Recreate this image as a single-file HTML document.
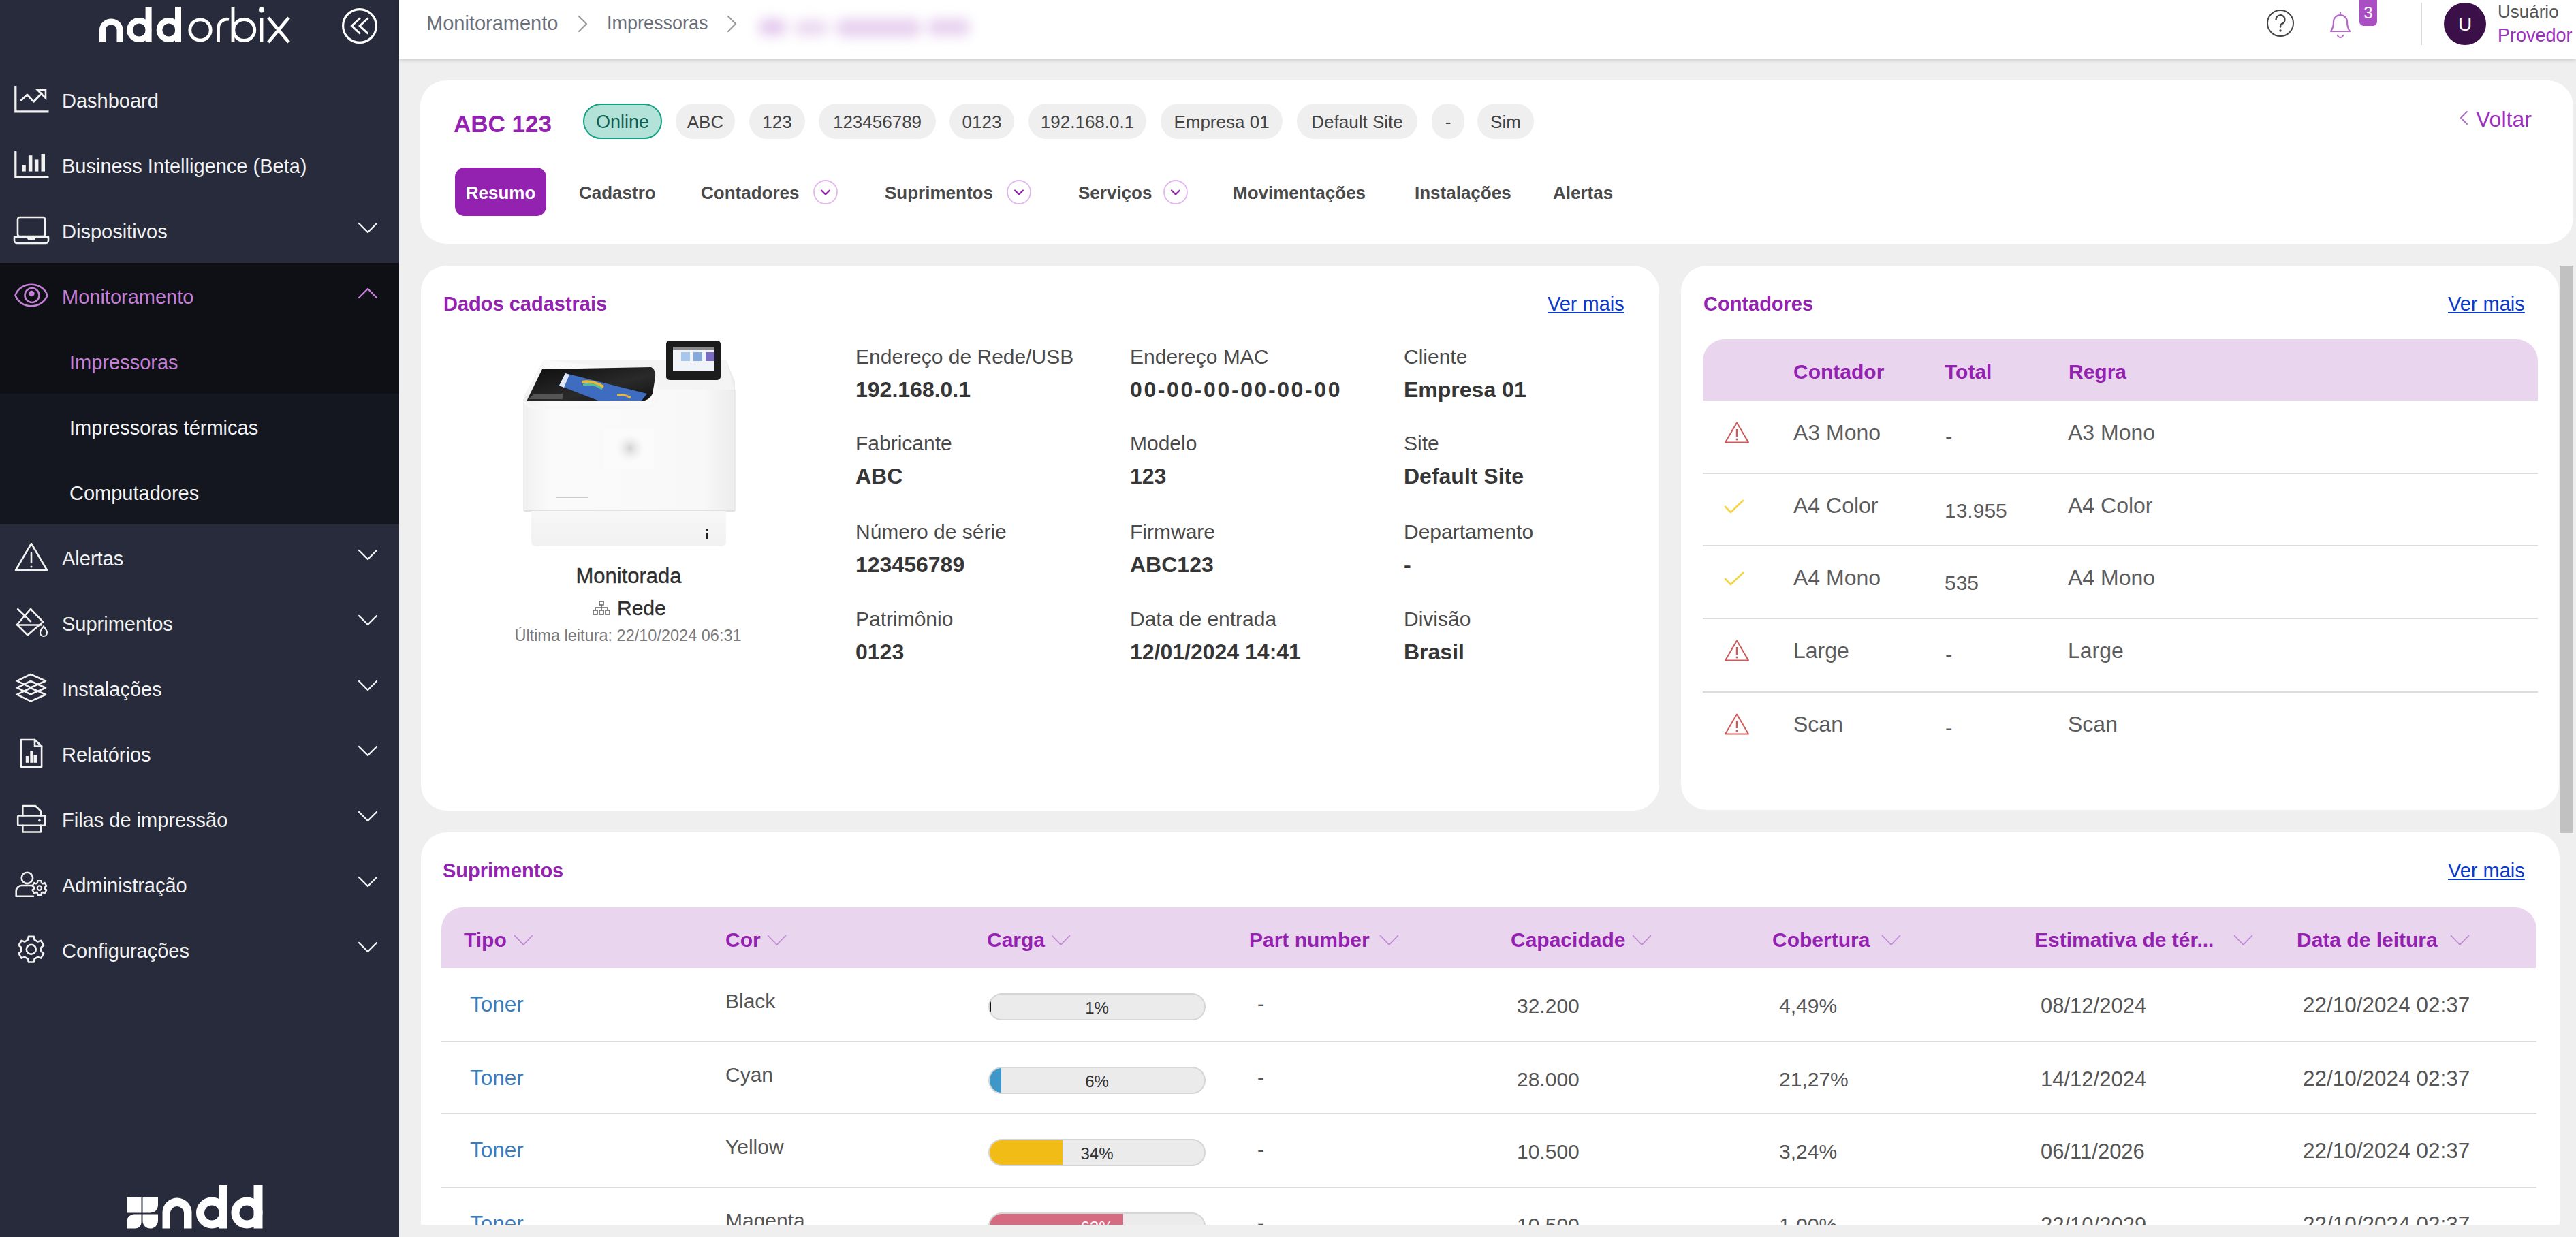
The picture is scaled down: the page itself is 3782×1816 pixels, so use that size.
<!DOCTYPE html>
<html><head><meta charset="utf-8"><style>
html,body{margin:0;padding:0;width:3782px;height:1816px;overflow:hidden;position:relative;font-family:"Liberation Sans",sans-serif}
.t{position:absolute;white-space:nowrap;line-height:1}
</style></head><body>
<div style="position:absolute;left:0px;top:0px;width:3782px;height:1816px;background:#efefef"></div>
<div style="position:absolute;left:0px;top:0px;width:586px;height:1816px;background:#272b3b"></div>
<div style="position:absolute;left:0px;top:386px;width:586px;height:192px;background:#0f1016"></div>
<div style="position:absolute;left:0px;top:578px;width:586px;height:192px;background:#141620"></div>
<div style="position:absolute;left:586px;top:0px;width:3196px;height:86px;background:#fff;box-shadow:0 2px 6px rgba(0,0,0,0.18)"></div>
<div style="position:absolute;left:617px;top:118px;width:3161px;height:240px;background:#fff;border-radius:38px"></div>
<div style="position:absolute;left:618px;top:390px;width:1818px;height:800px;background:#fff;border-radius:38px"></div>
<div style="position:absolute;left:2468px;top:390px;width:1289px;height:799px;background:#fff;border-radius:38px"></div>
<div style="position:absolute;left:618px;top:1222px;width:3140px;height:678px;background:#fff;border-radius:38px"></div>
<div style="position:absolute;left:3758px;top:390px;width:20px;height:833px;background:#c1c1c1"></div>
<svg style="position:absolute;left:140px;top:6px;" width="292" height="60" viewBox="0 0 292 60" fill="none">
      <g fill="#fff">
        <path d="M6 56 V36 A17.5 17.5 0 0 1 40.5 36 V56 H31.5 V37 A8.5 8.5 0 0 0 15 37 V56 Z"/>
        <rect x="73.6" y="4" width="9" height="52"/>
        <rect x="117" y="4" width="9" height="52"/>
      </g>
      <g stroke="#fff" fill="none">
        <circle cx="64.3" cy="38" r="13.8" stroke-width="8.6"/>
        <circle cx="107.8" cy="38" r="13.8" stroke-width="8.6"/>
        <circle cx="154" cy="38" r="15.2" stroke-width="4.8"/>
        <path d="M180.5 56 V36 A13 13 0 0 1 196 22.5" stroke-width="4.8"/>
        <path d="M202 4 V56" stroke-width="4.8"/>
        <circle cx="218.3" cy="38" r="15.5" stroke-width="4.8"/>
        <path d="M244 20 V56" stroke-width="4.8"/>
      </g>
      <circle cx="244" cy="8.5" r="4" fill="#fff"/>
      <path d="M254 20 L284 56 M284 20 L254 56" stroke="#fff" stroke-width="4.8"/>
    </svg>
<svg style="position:absolute;left:500px;top:11px;" width="56" height="56" viewBox="0 0 56 56" fill="none"><circle cx="28" cy="27" r="24.4" stroke="#fff" stroke-width="3.2"/>
      <path d="M28.8 15.5 L16.5 27 L28.8 38.5 M40.5 15.5 L28.2 27 L40.5 38.5" stroke="#fff" stroke-width="3" stroke-linecap="butt" stroke-linejoin="miter"/></svg>
<div class="t" style="left:91.0px;top:133.5px;font-size:29px;font-weight:400;color:#f2f2f2;">Dashboard</div>
<div class="t" style="left:91.0px;top:229.5px;font-size:29px;font-weight:400;color:#f2f2f2;">Business Intelligence (Beta)</div>
<div class="t" style="left:91.0px;top:325.5px;font-size:29px;font-weight:400;color:#f2f2f2;">Dispositivos</div>
<svg style="position:absolute;left:525px;top:326px;" width="30" height="17" viewBox="0 0 30 17" fill="none"><path d="M2 2 L15 15 L28 2" stroke="#f2f2f2" stroke-width="2.4" stroke-linecap="round" stroke-linejoin="round"/></svg>
<div class="t" style="left:91.0px;top:421.5px;font-size:29px;font-weight:400;color:#c47fd6;">Monitoramento</div>
<svg style="position:absolute;left:525px;top:422px;" width="30" height="17" viewBox="0 0 30 17" fill="none"><path d="M2 15 L15 2 L28 15" stroke="#c47fd6" stroke-width="2.4" stroke-linecap="round" stroke-linejoin="round"/></svg>
<div class="t" style="left:91.0px;top:805.5px;font-size:29px;font-weight:400;color:#f2f2f2;">Alertas</div>
<svg style="position:absolute;left:525px;top:806px;" width="30" height="17" viewBox="0 0 30 17" fill="none"><path d="M2 2 L15 15 L28 2" stroke="#f2f2f2" stroke-width="2.4" stroke-linecap="round" stroke-linejoin="round"/></svg>
<div class="t" style="left:91.0px;top:901.5px;font-size:29px;font-weight:400;color:#f2f2f2;">Suprimentos</div>
<svg style="position:absolute;left:525px;top:902px;" width="30" height="17" viewBox="0 0 30 17" fill="none"><path d="M2 2 L15 15 L28 2" stroke="#f2f2f2" stroke-width="2.4" stroke-linecap="round" stroke-linejoin="round"/></svg>
<div class="t" style="left:91.0px;top:997.5px;font-size:29px;font-weight:400;color:#f2f2f2;">Instalações</div>
<svg style="position:absolute;left:525px;top:998px;" width="30" height="17" viewBox="0 0 30 17" fill="none"><path d="M2 2 L15 15 L28 2" stroke="#f2f2f2" stroke-width="2.4" stroke-linecap="round" stroke-linejoin="round"/></svg>
<div class="t" style="left:91.0px;top:1093.5px;font-size:29px;font-weight:400;color:#f2f2f2;">Relatórios</div>
<svg style="position:absolute;left:525px;top:1094px;" width="30" height="17" viewBox="0 0 30 17" fill="none"><path d="M2 2 L15 15 L28 2" stroke="#f2f2f2" stroke-width="2.4" stroke-linecap="round" stroke-linejoin="round"/></svg>
<div class="t" style="left:91.0px;top:1189.5px;font-size:29px;font-weight:400;color:#f2f2f2;">Filas de impressão</div>
<svg style="position:absolute;left:525px;top:1190px;" width="30" height="17" viewBox="0 0 30 17" fill="none"><path d="M2 2 L15 15 L28 2" stroke="#f2f2f2" stroke-width="2.4" stroke-linecap="round" stroke-linejoin="round"/></svg>
<div class="t" style="left:91.0px;top:1285.5px;font-size:29px;font-weight:400;color:#f2f2f2;">Administração</div>
<svg style="position:absolute;left:525px;top:1286px;" width="30" height="17" viewBox="0 0 30 17" fill="none"><path d="M2 2 L15 15 L28 2" stroke="#f2f2f2" stroke-width="2.4" stroke-linecap="round" stroke-linejoin="round"/></svg>
<div class="t" style="left:91.0px;top:1381.5px;font-size:29px;font-weight:400;color:#f2f2f2;">Configurações</div>
<svg style="position:absolute;left:525px;top:1382px;" width="30" height="17" viewBox="0 0 30 17" fill="none"><path d="M2 2 L15 15 L28 2" stroke="#f2f2f2" stroke-width="2.4" stroke-linecap="round" stroke-linejoin="round"/></svg>
<div class="t" style="left:102.0px;top:517.5px;font-size:29px;font-weight:400;color:#c47fd6;">Impressoras</div>
<div class="t" style="left:102.0px;top:613.5px;font-size:29px;font-weight:400;color:#f2f2f2;">Impressoras térmicas</div>
<div class="t" style="left:102.0px;top:709.5px;font-size:29px;font-weight:400;color:#f2f2f2;">Computadores</div>
<svg style="position:absolute;left:18px;top:123px;" width="56" height="46" viewBox="0 0 56 46" fill="none"><path d="M4.8 3 V40.8 H53.5" stroke="#f2f2f2" stroke-width="3.2" fill="none" stroke-linejoin="miter"/><path d="M12.2 25 L21.9 16 L31.5 26.2 L44 13" stroke="#f2f2f2" stroke-width="3" fill="none" stroke-linejoin="round"/><path d="M37 9 H49 V21 Z" stroke="#f2f2f2" stroke-width="2.6" fill="none" stroke-linejoin="miter"/></svg>
<svg style="position:absolute;left:18px;top:220px;" width="56" height="44" viewBox="0 0 56 44" fill="none"><path d="M4.8 2 V39.6 H53.5" stroke="#f2f2f2" stroke-width="3.2" fill="none" stroke-linejoin="miter"/><rect x="14.3" y="22" width="5.5" height="9.6" fill="#f2f2f2"/><rect x="23.9" y="8.2" width="5.5" height="23.4" fill="#f2f2f2"/><rect x="32.9" y="14.4" width="5.5" height="17.2" fill="#f2f2f2"/><rect x="42.5" y="6" width="5.5" height="25.6" fill="#f2f2f2"/></svg>
<svg style="position:absolute;left:18px;top:316px;" width="56" height="44" viewBox="0 0 56 44" fill="none"><rect x="8" y="3" width="40" height="28" rx="3" stroke="#f2f2f2" stroke-width="2.6" fill="none" stroke-linecap="round" stroke-linejoin="round"/><path d="M3 32 H53 V37 A4 4 0 0 1 49 41 H7 A4 4 0 0 1 3 37 Z" stroke="#f2f2f2" stroke-width="2.6" fill="none" stroke-linecap="round" stroke-linejoin="round"/><path d="M22 32 L24 35 H32 L34 32" stroke="#f2f2f2" stroke-width="2.6" fill="none" stroke-linecap="round" stroke-linejoin="round"/></svg>
<svg style="position:absolute;left:20px;top:414px;" width="52" height="40" viewBox="0 0 52 40" fill="none"><path d="M2.5 19.5 C10 -1.5 42 -1.5 49.5 19.5 C42 40.5 10 40.5 2.5 19.5 Z" stroke="#c47fd6" stroke-width="2.6" fill="none"/><circle cx="27" cy="19.5" r="10.5" stroke="#c47fd6" stroke-width="2.6" fill="none"/><circle cx="26.5" cy="17" r="4.2" fill="#c47fd6"/></svg>
<svg style="position:absolute;left:20px;top:795px;" width="52" height="46" viewBox="0 0 52 46" fill="none"><path d="M26 3 L49 42 H3 Z" stroke="#f2f2f2" stroke-width="2.6" fill="none" stroke-linecap="round" stroke-linejoin="round"/><path d="M26 17 V31" stroke="#f2f2f2" stroke-width="2.6" fill="none" stroke-linecap="round" stroke-linejoin="round"/><circle cx="26" cy="37" r="1.6" fill="#f2f2f2"/></svg>
<svg style="position:absolute;left:20px;top:891px;" width="52" height="46" viewBox="0 0 52 46" fill="none"><path d="M25 3 L43 22 L20.4 41.4 L5 26 Z" stroke="#f2f2f2" stroke-width="2.6" fill="none" stroke-linecap="round" stroke-linejoin="round"/><path d="M5.5 26.5 H41" stroke="#f2f2f2" stroke-width="2.6" fill="none" stroke-linecap="round" stroke-linejoin="round"/><path d="M6.2 3.2 L25 21.4" stroke="#f2f2f2" stroke-width="2.6" fill="none" stroke-linecap="round" stroke-linejoin="round"/><path d="M44 28.5 C47 32 49 35 49 38 A5 5 0 0 1 39 38 C39 35 41 32 44 28.5 Z" stroke="#f2f2f2" stroke-width="2.2" fill="none"/></svg>
<svg style="position:absolute;left:22px;top:987px;" width="50" height="46" viewBox="0 0 50 46" fill="none"><path d="M23 3 L45 12.7 L23 22.4 L3 12.7 Z" stroke="#f2f2f2" stroke-width="2.6" fill="none" stroke-linecap="round" stroke-linejoin="round"/><path d="M23 13 L45 22.7 L23 32.4 L3 22.7 Z" stroke="#f2f2f2" stroke-width="2.6" fill="none" stroke-linecap="round" stroke-linejoin="round"/><path d="M23 23 L45 32.7 L23 42.4 L3 32.7 Z" stroke="#f2f2f2" stroke-width="2.6" fill="none" stroke-linecap="round" stroke-linejoin="round"/></svg>
<svg style="position:absolute;left:27px;top:1083px;" width="40" height="46" viewBox="0 0 40 46" fill="none"><path d="M3.7 3 H24 L34.1 12.5 V42.7 H3.7 Z" stroke="#f2f2f2" stroke-width="2.6" fill="none" stroke-linecap="round" stroke-linejoin="round"/><path d="M24 3 V12.5 H34.1" stroke="#f2f2f2" stroke-width="2.6" fill="none" stroke-linecap="round" stroke-linejoin="round"/><rect x="10.8" y="27" width="4.6" height="9.8" fill="#f2f2f2"/><rect x="17.3" y="19.4" width="4.5" height="17.4" fill="#f2f2f2"/><rect x="22.5" y="25.2" width="4.5" height="11.6" fill="#f2f2f2"/></svg>
<svg style="position:absolute;left:22px;top:1179px;" width="50" height="46" viewBox="0 0 50 46" fill="none"><path d="M11.3 18.5 V4 H30 L37.8 11.5 V18.5" stroke="#f2f2f2" stroke-width="2.6" fill="none" stroke-linecap="round" stroke-linejoin="round"/><rect x="4.2" y="18.5" width="40.1" height="14.2" rx="1.5" stroke="#f2f2f2" stroke-width="2.6" fill="none" stroke-linecap="round" stroke-linejoin="round"/><path d="M11.3 32.7 V42.5 H37.8 V32.7" stroke="#f2f2f2" stroke-width="2.6" fill="none" stroke-linecap="round" stroke-linejoin="round"/><circle cx="35.9" cy="25.6" r="1.8" fill="#f2f2f2"/></svg>
<svg style="position:absolute;left:20px;top:1277px;" width="54" height="44" viewBox="0 0 54 44" fill="none"><circle cx="19.9" cy="11.9" r="8.2" stroke="#f2f2f2" stroke-width="2.6" fill="none" stroke-linecap="round" stroke-linejoin="round"/><path d="M29 38.7 H3.7 V31 A8 8 0 0 1 11.7 23 H27" stroke="#f2f2f2" stroke-width="2.6" fill="none" stroke-linecap="round" stroke-linejoin="round"/><path d="M40.90 34.02 L40.51 37.08 L35.29 37.08 L34.90 34.02 L32.97 32.90 L30.13 34.10 L27.52 29.58 L29.98 27.71 L29.98 25.49 L27.52 23.62 L30.13 19.10 L32.97 20.30 L34.90 19.18 L35.29 16.12 L40.51 16.12 L40.90 19.18 L42.83 20.30 L45.67 19.10 L48.28 23.62 L45.82 25.49 L45.82 27.71 L48.28 29.58 L45.67 34.10 L42.83 32.90 Z" stroke="#f2f2f2" stroke-width="2.4" fill="#272b3b" stroke-linejoin="round"/><circle cx="37.9" cy="26.6" r="3.2" stroke="#f2f2f2" stroke-width="2.2"/></svg>
<svg style="position:absolute;left:22px;top:1370px;" width="50" height="48" viewBox="0 0 50 48" fill="none"><path d="M28.62 37.69 L27.79 42.48 L19.81 42.48 L18.98 37.69 L14.09 34.87 L9.53 36.55 L5.54 29.63 L9.27 26.52 L9.27 20.88 L5.54 17.77 L9.53 10.85 L14.09 12.53 L18.98 9.71 L19.81 4.92 L27.79 4.92 L28.62 9.71 L33.51 12.53 L38.07 10.85 L42.06 17.77 L38.33 20.88 L38.33 26.52 L42.06 29.63 L38.07 36.55 L33.51 34.87 Z" stroke="#f2f2f2" stroke-width="2.6" fill="none" stroke-linecap="round" stroke-linejoin="round"/><circle cx="23.8" cy="23.7" r="7" stroke="#f2f2f2" stroke-width="2.6" fill="none" stroke-linecap="round" stroke-linejoin="round"/></svg>
<svg style="position:absolute;left:185px;top:1737px;" width="204" height="70" viewBox="0 0 204 70" fill="none"><g fill="#fff">
      <path d="M1 21 H22.5 V43.5 H1 Z"/>
      <path d="M24.5 21 H47 V32 A11.5 11.5 0 0 1 35.5 43.5 H24.5 Z"/>
      <path d="M1 57 A11.5 11.5 0 0 1 12.5 45.5 H22.5 V58 A8.5 8.5 0 0 1 14 66.5 H1 Z"/>
      <path d="M24.5 45.5 H47 V55 A11.5 11.5 0 0 1 35.5 66.5 A11 11 0 0 1 24.5 55.5 Z"/>
      <path d="M53.5 66.5 V43 A21.5 21.5 0 0 1 96.5 43 V66.5 H85 V44 A10 10 0 0 0 65 44 V66.5 Z"/>
      <rect x="136" y="3" width="13" height="63.5"/>
      <rect x="187.5" y="3" width="13" height="63.5"/>
      </g><g stroke="#fff" fill="none" stroke-width="12">
      <circle cx="126" cy="43.5" r="17"/>
      <circle cx="177.5" cy="43.5" r="17"/>
    </g></svg>
<div class="t" style="left:626.0px;top:19.5px;font-size:29px;font-weight:400;color:#6a6e78;">Monitoramento</div>
<svg style="position:absolute;left:846px;top:20px;" width="20" height="30" viewBox="0 0 20 30" fill="none"><path d="M4 4 L15 15 L4 26" stroke="#9a9a9a" stroke-width="2.2" stroke-linecap="round" stroke-linejoin="round"/></svg>
<div class="t" style="left:891.0px;top:21.1px;font-size:27px;font-weight:400;color:#6a6e78;">Impressoras</div>
<svg style="position:absolute;left:1065px;top:20px;" width="20" height="30" viewBox="0 0 20 30" fill="none"><path d="M4 4 L15 15 L4 26" stroke="#9a9a9a" stroke-width="2.2" stroke-linecap="round" stroke-linejoin="round"/></svg>
<div style="position:absolute;left:1100px;top:14px;width:340px;height:50px;filter:blur(9px)"><div style="position:absolute;left:14px;top:14px;width:40px;height:24px;background:#e3c8ee;border-radius:10px"></div><div style="position:absolute;left:66px;top:16px;width:50px;height:22px;background:#ead7f1;border-radius:10px"></div><div style="position:absolute;left:128px;top:14px;width:124px;height:26px;background:#e6cfef;border-radius:10px"></div><div style="position:absolute;left:262px;top:14px;width:62px;height:24px;background:#e6cfef;border-radius:10px"></div></div>
<svg style="position:absolute;left:3326px;top:12px;" width="44" height="44" viewBox="0 0 44 44" fill="none"><circle cx="22" cy="22" r="19" stroke="#444" stroke-width="2"/><path d="M15.5 17 A6.5 6.5 0 1 1 24 23 C22.5 23.8 22 25 22 27.5" stroke="#444" stroke-width="2.4" stroke-linecap="round"/><circle cx="22" cy="33" r="1.7" fill="#444"/></svg>
<svg style="position:absolute;left:3414px;top:12px;" width="44" height="46" viewBox="0 0 44 46" fill="none"><path d="M8 34 C11 30 12 26 12 20 A10 10 0 0 1 32 20 C32 26 33 30 36 34 Z" stroke="#b866cf" stroke-width="2.2" stroke-linejoin="round"/><path d="M22 6 V9" stroke="#b866cf" stroke-width="2.2"/><path d="M18 39 A4 4 0 0 0 26 39" stroke="#b866cf" stroke-width="2.2"/></svg>
<div style="position:absolute;left:3464px;top:0px;width:26px;height:38px;background:#a94fc3;border-radius:0 0 6px 6px"></div>
<div class="t" style="left:3477.0px;transform:translateX(-50%);top:6.7px;font-size:24px;font-weight:400;color:#fff;">3</div>
<div style="position:absolute;left:3554px;top:4px;width:2px;height:62px;background:#d9d9d9"></div>
<div style="position:absolute;left:3588px;top:4px;width:62px;height:62px;background:#3b0f48;border-radius:50%"></div>
<div class="t" style="left:3619.0px;transform:translateX(-50%);top:22.3px;font-size:28px;font-weight:400;color:#fff;">U</div>
<div class="t" style="left:3667.0px;top:4.0px;font-size:26px;font-weight:400;color:#555;">Usuário</div>
<div class="t" style="left:3667.0px;top:39.1px;font-size:27px;font-weight:400;color:#9b2fc0;">Provedor</div>
<div class="t" style="left:666.0px;top:164.4px;font-size:35px;font-weight:700;color:#9322b0;">ABC 123</div>
<div style="position:absolute;left:856px;top:152px;width:116px;height:52px;background:#b3e2d8;border-radius:26px;border:2px solid #15a083;box-sizing:border-box;"></div>
<div class="t" style="left:914.0px;transform:translateX(-50%);top:166.1px;font-size:27px;font-weight:400;color:#0f5e52;">Online</div>
<div style="position:absolute;left:992px;top:152px;width:87px;height:52px;background:#efefef;border-radius:26px;"></div>
<div class="t" style="left:1035.5px;transform:translateX(-50%);top:166.0px;font-size:26px;font-weight:400;color:#444;">ABC</div>
<div style="position:absolute;left:1100px;top:152px;width:82px;height:52px;background:#efefef;border-radius:26px;"></div>
<div class="t" style="left:1141.0px;transform:translateX(-50%);top:166.0px;font-size:26px;font-weight:400;color:#444;">123</div>
<div style="position:absolute;left:1202px;top:152px;width:172px;height:52px;background:#efefef;border-radius:26px;"></div>
<div class="t" style="left:1288.0px;transform:translateX(-50%);top:166.0px;font-size:26px;font-weight:400;color:#444;">123456789</div>
<div style="position:absolute;left:1394px;top:152px;width:95px;height:52px;background:#efefef;border-radius:26px;"></div>
<div class="t" style="left:1441.5px;transform:translateX(-50%);top:166.0px;font-size:26px;font-weight:400;color:#444;">0123</div>
<div style="position:absolute;left:1510px;top:152px;width:173px;height:52px;background:#efefef;border-radius:26px;"></div>
<div class="t" style="left:1596.5px;transform:translateX(-50%);top:166.0px;font-size:26px;font-weight:400;color:#444;">192.168.0.1</div>
<div style="position:absolute;left:1704px;top:152px;width:179px;height:52px;background:#efefef;border-radius:26px;"></div>
<div class="t" style="left:1793.5px;transform:translateX(-50%);top:166.0px;font-size:26px;font-weight:400;color:#444;">Empresa 01</div>
<div style="position:absolute;left:1904px;top:152px;width:177px;height:52px;background:#efefef;border-radius:26px;"></div>
<div class="t" style="left:1992.5px;transform:translateX(-50%);top:166.0px;font-size:26px;font-weight:400;color:#444;">Default Site</div>
<div style="position:absolute;left:2102px;top:152px;width:48px;height:52px;background:#efefef;border-radius:26px;"></div>
<div class="t" style="left:2126.0px;transform:translateX(-50%);top:166.0px;font-size:26px;font-weight:400;color:#444;">-</div>
<div style="position:absolute;left:2169px;top:152px;width:83px;height:52px;background:#efefef;border-radius:26px;"></div>
<div class="t" style="left:2210.5px;transform:translateX(-50%);top:166.0px;font-size:26px;font-weight:400;color:#444;">Sim</div>
<svg style="position:absolute;left:3608px;top:160px;" width="20" height="30" viewBox="0 0 20 30" fill="none"><path d="M14 4 L5 13 L14 22" stroke="#b06ccc" stroke-width="2" stroke-linecap="round" stroke-linejoin="round"/></svg>
<div class="t" style="left:3635.0px;top:158.9px;font-size:32px;font-weight:400;color:#9b2fc0;">Voltar</div>
<div style="position:absolute;left:668px;top:246px;width:134px;height:71px;background:#9322b0;border-radius:14px"></div>
<div class="t" style="left:735.0px;transform:translateX(-50%);top:270.0px;font-size:26px;font-weight:700;color:#fff;">Resumo</div>
<div class="t" style="left:850.0px;top:270.0px;font-size:26px;font-weight:700;color:#4a4a4a;">Cadastro</div>
<div class="t" style="left:1029.0px;top:270.0px;font-size:26px;font-weight:700;color:#4a4a4a;">Contadores</div>
<div class="t" style="left:1299.0px;top:270.0px;font-size:26px;font-weight:700;color:#4a4a4a;">Suprimentos</div>
<div class="t" style="left:1583.0px;top:270.0px;font-size:26px;font-weight:700;color:#4a4a4a;">Serviços</div>
<div class="t" style="left:1810.0px;top:270.0px;font-size:26px;font-weight:700;color:#4a4a4a;">Movimentações</div>
<div class="t" style="left:2077.0px;top:270.0px;font-size:26px;font-weight:700;color:#4a4a4a;">Instalações</div>
<div class="t" style="left:2280.0px;top:270.0px;font-size:26px;font-weight:700;color:#4a4a4a;">Alertas</div>
<svg style="position:absolute;left:1193px;top:263px;" width="38" height="38" viewBox="0 0 38 38" fill="none"><circle cx="19" cy="19" r="17" stroke="#e4b6ef" stroke-width="1.8"/><path d="M13 16.5 L19 22.5 L25 16.5" stroke="#9322b0" stroke-width="2.2" stroke-linecap="round" stroke-linejoin="round"/></svg>
<svg style="position:absolute;left:1477px;top:263px;" width="38" height="38" viewBox="0 0 38 38" fill="none"><circle cx="19" cy="19" r="17" stroke="#e4b6ef" stroke-width="1.8"/><path d="M13 16.5 L19 22.5 L25 16.5" stroke="#9322b0" stroke-width="2.2" stroke-linecap="round" stroke-linejoin="round"/></svg>
<svg style="position:absolute;left:1707px;top:263px;" width="38" height="38" viewBox="0 0 38 38" fill="none"><circle cx="19" cy="19" r="17" stroke="#e4b6ef" stroke-width="1.8"/><path d="M13 16.5 L19 22.5 L25 16.5" stroke="#9322b0" stroke-width="2.2" stroke-linecap="round" stroke-linejoin="round"/></svg>
<div class="t" style="left:651.0px;top:431.5px;font-size:29px;font-weight:700;color:#9322b0;">Dados cadastrais</div>
<div class="t" style="left:2272.0px;top:431.5px;font-size:29px;font-weight:400;color:#0a3acb;text-decoration:underline;text-underline-offset:2px;text-decoration-thickness:2px">Ver mais</div>
<svg style="position:absolute;left:766px;top:498px;" width="320" height="310" viewBox="0 0 320 310" fill="none">
      <defs>
        <linearGradient id="body" x1="0" y1="0" x2="1" y2="0">
          <stop offset="0" stop-color="#f1f1f1"/><stop offset="0.12" stop-color="#fafafa"/><stop offset="0.85" stop-color="#f8f8f8"/><stop offset="1" stop-color="#ececec"/>
        </linearGradient>
        <linearGradient id="tray" x1="0" y1="0" x2="0" y2="1">
          <stop offset="0" stop-color="#f7f7f7"/><stop offset="1" stop-color="#f1f1f1"/>
        </linearGradient>
        <linearGradient id="blk" x1="0" y1="0" x2="1" y2="1">
          <stop offset="0" stop-color="#0d0d0d"/><stop offset="0.6" stop-color="#2a2a2a"/><stop offset="1" stop-color="#111"/>
        </linearGradient>
        <radialGradient id="logo"><stop offset="0" stop-color="#d2d2d2"/><stop offset="1" stop-color="#f2f2f2" stop-opacity="0"/></radialGradient>
      </defs>
      <path d="M32 30 H300 L313 62 V252 H3 V92 Q3 80 10 72 Z" fill="url(#body)"/>
      <path d="M32 30 H300 L312 74 H200 L196 50 Z" fill="#f4f4f4"/>
      <path d="M3 252 H313" stroke="#dadada" stroke-width="1.5"/>
      <path d="M14 252 H300 V296 Q300 304 292 304 H22 Q14 304 14 296 Z" fill="url(#tray)"/>
      <path d="M3 252 V88 Q6 84 10 84 M313 74 V252" stroke="#e2e2e2" stroke-width="1.2"/>
      <path d="M8 89 L30 44 L190 41 Q197 44 196 56 L192 80 Q188 90 175 91 H8 Z" fill="url(#blk)"/>
      <path d="M10 88 H60 V80 H18 Z" fill="#555"/>
      <path d="M55 68 L64 50 L184 80 L176 90 H112 Z" fill="#3e6cc0"/>
      <path d="M55 68 L64 50 L70 52 L62 71 Z" fill="#dfe7f5"/>
      <path d="M88 63 Q104 60 120 70" stroke="#e8b83a" stroke-width="4" fill="none"/>
      <path d="M90 67 Q106 64 118 73" stroke="#57c29a" stroke-width="3" fill="none"/>
      <path d="M140 82 Q150 80 160 86" stroke="#e8b83a" stroke-width="3" fill="none"/>
      <path d="M5 92 Q8 100 24 100 H180 Q196 100 200 84" stroke="#f7f7f7" stroke-width="4" fill="none"/>
      <rect x="212" y="2" width="80" height="58" rx="5" fill="#1c1c1c"/>
      <rect x="222" y="11" width="60" height="35" fill="#f0f3f8"/>
      <rect x="222" y="11" width="60" height="5" fill="#8a8a8a"/>
      <rect x="234" y="19" width="13" height="13" fill="#a9c6ec"/><rect x="252" y="19" width="13" height="13" fill="#86a9dc"/><rect x="270" y="19" width="13" height="13" fill="#7a6cc0"/>
      <rect x="120" y="132" width="74" height="58" fill="#fbfbfb"/>
      <circle cx="159" cy="160" r="22" fill="url(#logo)"/>
      <path d="M50 232 H98" stroke="#bdbdbd" stroke-width="1.5"/>
      <path d="M272 284 V294" stroke="#222" stroke-width="2.5"/><rect x="271" y="279" width="2.5" height="2.5" fill="#222"/>
    </svg>
<div class="t" style="left:923.0px;transform:translateX(-50%);top:829.8px;font-size:31px;font-weight:400;color:#2f2f2f;-webkit-text-stroke:0.4px #2f2f2f">Monitorada</div>
<svg style="position:absolute;left:870px;top:881px;" width="26" height="24" viewBox="0 0 26 24" fill="none"><g stroke="#666" stroke-width="1.6" fill="none"><rect x="10" y="2" width="6" height="5"/><path d="M13 7 V11 M4 15 V11 H22 V15 M13 11 V15"/><rect x="1" y="15" width="6" height="6"/><rect x="10" y="15" width="6" height="6"/><rect x="19" y="15" width="6" height="6"/></g></svg>
<div class="t" style="left:906.0px;top:877.6px;font-size:30px;font-weight:400;color:#2f2f2f;-webkit-text-stroke:0.4px #2f2f2f">Rede</div>
<div class="t" style="left:922.0px;transform:translateX(-50%);top:921.6px;font-size:23.5px;font-weight:400;color:#7a7a7a;">Última leitura: 22/10/2024 06:31</div>
<div class="t" style="left:1256.0px;top:508.6px;font-size:30px;font-weight:400;color:#4a4a4a;">Endereço de Rede/USB</div>
<div class="t" style="left:1256.0px;top:556.4px;font-size:32px;font-weight:700;color:#363636;">192.168.0.1</div>
<div class="t" style="left:1659.0px;top:508.6px;font-size:30px;font-weight:400;color:#4a4a4a;">Endereço MAC</div>
<div class="t" style="left:1659.0px;top:556.4px;font-size:32px;font-weight:700;color:#363636;letter-spacing:2.6px">00-00-00-00-00-00</div>
<div class="t" style="left:2061.0px;top:508.6px;font-size:30px;font-weight:400;color:#4a4a4a;">Cliente</div>
<div class="t" style="left:2061.0px;top:556.4px;font-size:32px;font-weight:700;color:#363636;">Empresa 01</div>
<div class="t" style="left:1256.0px;top:635.6px;font-size:30px;font-weight:400;color:#4a4a4a;">Fabricante</div>
<div class="t" style="left:1256.0px;top:683.4px;font-size:32px;font-weight:700;color:#363636;">ABC</div>
<div class="t" style="left:1659.0px;top:635.6px;font-size:30px;font-weight:400;color:#4a4a4a;">Modelo</div>
<div class="t" style="left:1659.0px;top:683.4px;font-size:32px;font-weight:700;color:#363636;">123</div>
<div class="t" style="left:2061.0px;top:635.6px;font-size:30px;font-weight:400;color:#4a4a4a;">Site</div>
<div class="t" style="left:2061.0px;top:683.4px;font-size:32px;font-weight:700;color:#363636;">Default Site</div>
<div class="t" style="left:1256.0px;top:765.6px;font-size:30px;font-weight:400;color:#4a4a4a;">Número de série</div>
<div class="t" style="left:1256.0px;top:813.4px;font-size:32px;font-weight:700;color:#363636;">123456789</div>
<div class="t" style="left:1659.0px;top:765.6px;font-size:30px;font-weight:400;color:#4a4a4a;">Firmware</div>
<div class="t" style="left:1659.0px;top:813.4px;font-size:32px;font-weight:700;color:#363636;">ABC123</div>
<div class="t" style="left:2061.0px;top:765.6px;font-size:30px;font-weight:400;color:#4a4a4a;">Departamento</div>
<div class="t" style="left:2061.0px;top:813.4px;font-size:32px;font-weight:700;color:#363636;">-</div>
<div class="t" style="left:1256.0px;top:893.6px;font-size:30px;font-weight:400;color:#4a4a4a;">Patrimônio</div>
<div class="t" style="left:1256.0px;top:941.4px;font-size:32px;font-weight:700;color:#363636;">0123</div>
<div class="t" style="left:1659.0px;top:893.6px;font-size:30px;font-weight:400;color:#4a4a4a;">Data de entrada</div>
<div class="t" style="left:1659.0px;top:941.4px;font-size:32px;font-weight:700;color:#363636;">12/01/2024 14:41</div>
<div class="t" style="left:2061.0px;top:893.6px;font-size:30px;font-weight:400;color:#4a4a4a;">Divisão</div>
<div class="t" style="left:2061.0px;top:941.4px;font-size:32px;font-weight:700;color:#363636;">Brasil</div>
<div class="t" style="left:2501.0px;top:431.5px;font-size:29px;font-weight:700;color:#9322b0;">Contadores</div>
<div class="t" style="left:3594.0px;top:431.5px;font-size:29px;font-weight:400;color:#0a3acb;text-decoration:underline;text-underline-offset:2px;text-decoration-thickness:2px">Ver mais</div>
<div style="position:absolute;left:2500px;top:498px;width:1226px;height:90px;background:#ead5ef;border-radius:32px 32px 0 0"></div>
<div class="t" style="left:2633.0px;top:530.6px;font-size:30px;font-weight:700;color:#9322b0;">Contador</div>
<div class="t" style="left:2855.0px;top:530.6px;font-size:30px;font-weight:700;color:#9322b0;">Total</div>
<div class="t" style="left:3037.0px;top:530.6px;font-size:30px;font-weight:700;color:#9322b0;">Regra</div>
<svg style="position:absolute;left:2531px;top:618px;" width="38" height="34" viewBox="0 0 38 34" fill="none"><path d="M19 2.5 L36 31.5 H2 Z" stroke="#cf5a5a" stroke-width="2" stroke-linejoin="round"/><path d="M19 12 V23" stroke="#cf5a5a" stroke-width="2.4"/><circle cx="19" cy="27" r="1.5" fill="#cf5a5a"/></svg>
<div class="t" style="left:2633.0px;top:618.9px;font-size:32px;font-weight:400;color:#5c5c5c;">A3 Mono</div>
<div class="t" style="left:2856.0px;top:624.8px;font-size:31px;font-weight:400;color:#5a5a5a;">-</div>
<div class="t" style="left:3036.0px;top:618.9px;font-size:32px;font-weight:400;color:#5c5c5c;">A3 Mono</div>
<div style="position:absolute;left:2500px;top:694px;width:1226px;height:2px;background:#dcdcdc"></div>
<svg style="position:absolute;left:2531px;top:732px;" width="30" height="24" viewBox="0 0 30 24" fill="none"><path d="M2 12 L10 20 L28 3" stroke="#f5d442" stroke-width="2.6" stroke-linecap="round" stroke-linejoin="round"/></svg>
<div class="t" style="left:2633.0px;top:725.9px;font-size:32px;font-weight:400;color:#5c5c5c;">A4 Color</div>
<div class="t" style="left:2855.0px;top:734.6px;font-size:30px;font-weight:400;color:#5a5a5a;">13.955</div>
<div class="t" style="left:3036.0px;top:725.9px;font-size:32px;font-weight:400;color:#5c5c5c;">A4 Color</div>
<div style="position:absolute;left:2500px;top:800px;width:1226px;height:2px;background:#dcdcdc"></div>
<svg style="position:absolute;left:2531px;top:838px;" width="30" height="24" viewBox="0 0 30 24" fill="none"><path d="M2 12 L10 20 L28 3" stroke="#f5d442" stroke-width="2.6" stroke-linecap="round" stroke-linejoin="round"/></svg>
<div class="t" style="left:2633.0px;top:831.9px;font-size:32px;font-weight:400;color:#5c5c5c;">A4 Mono</div>
<div class="t" style="left:2855.0px;top:840.6px;font-size:30px;font-weight:400;color:#5a5a5a;">535</div>
<div class="t" style="left:3036.0px;top:831.9px;font-size:32px;font-weight:400;color:#5c5c5c;">A4 Mono</div>
<div style="position:absolute;left:2500px;top:907px;width:1226px;height:2px;background:#dcdcdc"></div>
<svg style="position:absolute;left:2531px;top:938px;" width="38" height="34" viewBox="0 0 38 34" fill="none"><path d="M19 2.5 L36 31.5 H2 Z" stroke="#cf5a5a" stroke-width="2" stroke-linejoin="round"/><path d="M19 12 V23" stroke="#cf5a5a" stroke-width="2.4"/><circle cx="19" cy="27" r="1.5" fill="#cf5a5a"/></svg>
<div class="t" style="left:2633.0px;top:938.9px;font-size:32px;font-weight:400;color:#5c5c5c;">Large</div>
<div class="t" style="left:2856.0px;top:944.8px;font-size:31px;font-weight:400;color:#5a5a5a;">-</div>
<div class="t" style="left:3036.0px;top:938.9px;font-size:32px;font-weight:400;color:#5c5c5c;">Large</div>
<div style="position:absolute;left:2500px;top:1015px;width:1226px;height:2px;background:#dcdcdc"></div>
<svg style="position:absolute;left:2531px;top:1046px;" width="38" height="34" viewBox="0 0 38 34" fill="none"><path d="M19 2.5 L36 31.5 H2 Z" stroke="#cf5a5a" stroke-width="2" stroke-linejoin="round"/><path d="M19 12 V23" stroke="#cf5a5a" stroke-width="2.4"/><circle cx="19" cy="27" r="1.5" fill="#cf5a5a"/></svg>
<div class="t" style="left:2633.0px;top:1046.9px;font-size:32px;font-weight:400;color:#5c5c5c;">Scan</div>
<div class="t" style="left:2856.0px;top:1052.8px;font-size:31px;font-weight:400;color:#5a5a5a;">-</div>
<div class="t" style="left:3036.0px;top:1046.9px;font-size:32px;font-weight:400;color:#5c5c5c;">Scan</div>
<div class="t" style="left:650.0px;top:1263.5px;font-size:29px;font-weight:700;color:#9322b0;">Suprimentos</div>
<div class="t" style="left:3594.0px;top:1263.5px;font-size:29px;font-weight:400;color:#0a3acb;text-decoration:underline;text-underline-offset:2px;text-decoration-thickness:2px">Ver mais</div>
<div style="position:absolute;left:648px;top:1332px;width:3076px;height:89px;background:#ead5ef;border-radius:32px 32px 0 0"></div>
<div class="t" style="left:681.0px;top:1364.6px;font-size:30px;font-weight:700;color:#9322b0;">Tipo</div>
<div class="t" style="left:1065.0px;top:1364.6px;font-size:30px;font-weight:700;color:#9322b0;">Cor</div>
<div class="t" style="left:1449.0px;top:1364.6px;font-size:30px;font-weight:700;color:#9322b0;">Carga</div>
<div class="t" style="left:1834.0px;top:1364.6px;font-size:30px;font-weight:700;color:#9322b0;">Part number</div>
<div class="t" style="left:2218.0px;top:1364.6px;font-size:30px;font-weight:700;color:#9322b0;">Capacidade</div>
<div class="t" style="left:2602.0px;top:1364.6px;font-size:30px;font-weight:700;color:#9322b0;">Cobertura</div>
<div class="t" style="left:2987.0px;top:1364.6px;font-size:30px;font-weight:700;color:#9322b0;">Estimativa de tér...</div>
<div class="t" style="left:3372.0px;top:1364.6px;font-size:30px;font-weight:700;color:#9322b0;">Data de leitura</div>
<svg style="position:absolute;left:754px;top:1371px;" width="30" height="20" viewBox="0 0 30 20" fill="none"><path d="M1.5 2.5 L14.5 16 L27.5 2.5" stroke="#bf86d3" stroke-width="1.7" stroke-linecap="round" stroke-linejoin="round"/></svg>
<svg style="position:absolute;left:1126px;top:1371px;" width="30" height="20" viewBox="0 0 30 20" fill="none"><path d="M1.5 2.5 L14.5 16 L27.5 2.5" stroke="#bf86d3" stroke-width="1.7" stroke-linecap="round" stroke-linejoin="round"/></svg>
<svg style="position:absolute;left:1543px;top:1371px;" width="30" height="20" viewBox="0 0 30 20" fill="none"><path d="M1.5 2.5 L14.5 16 L27.5 2.5" stroke="#bf86d3" stroke-width="1.7" stroke-linecap="round" stroke-linejoin="round"/></svg>
<svg style="position:absolute;left:2025px;top:1371px;" width="30" height="20" viewBox="0 0 30 20" fill="none"><path d="M1.5 2.5 L14.5 16 L27.5 2.5" stroke="#bf86d3" stroke-width="1.7" stroke-linecap="round" stroke-linejoin="round"/></svg>
<svg style="position:absolute;left:2396px;top:1371px;" width="30" height="20" viewBox="0 0 30 20" fill="none"><path d="M1.5 2.5 L14.5 16 L27.5 2.5" stroke="#bf86d3" stroke-width="1.7" stroke-linecap="round" stroke-linejoin="round"/></svg>
<svg style="position:absolute;left:2762px;top:1371px;" width="30" height="20" viewBox="0 0 30 20" fill="none"><path d="M1.5 2.5 L14.5 16 L27.5 2.5" stroke="#bf86d3" stroke-width="1.7" stroke-linecap="round" stroke-linejoin="round"/></svg>
<svg style="position:absolute;left:3279px;top:1371px;" width="30" height="20" viewBox="0 0 30 20" fill="none"><path d="M1.5 2.5 L14.5 16 L27.5 2.5" stroke="#bf86d3" stroke-width="1.7" stroke-linecap="round" stroke-linejoin="round"/></svg>
<svg style="position:absolute;left:3597px;top:1371px;" width="30" height="20" viewBox="0 0 30 20" fill="none"><path d="M1.5 2.5 L14.5 16 L27.5 2.5" stroke="#bf86d3" stroke-width="1.7" stroke-linecap="round" stroke-linejoin="round"/></svg>
<div class="t" style="left:690.0px;top:1458.8px;font-size:31.5px;font-weight:400;color:#3a7dbd;">Toner</div>
<div class="t" style="left:1065.0px;top:1454.6px;font-size:30px;font-weight:400;color:#555;">Black</div>
<div style="position:absolute;left:1451px;top:1458px;width:319px;height:40px;box-sizing:border-box;border:2px solid #d6d6d6;border-radius:20px;background:#ebebeb;overflow:hidden"><div style="position:absolute;left:0;top:0;bottom:0;width:2.0px;background:#111"></div></div>
<div class="t" style="left:1610.5px;transform:translateX(-50%);top:1467.7px;font-size:24px;font-weight:400;color:#333;">1%</div>
<div class="t" style="left:1846.0px;top:1458.6px;font-size:30px;font-weight:400;color:#555;">-</div>
<div class="t" style="left:2227.0px;top:1461.6px;font-size:30px;font-weight:400;color:#555;">32.200</div>
<div class="t" style="left:2612.0px;top:1461.6px;font-size:30px;font-weight:400;color:#555;">4,49%</div>
<div class="t" style="left:2996.0px;top:1460.8px;font-size:31px;font-weight:400;color:#555;">08/12/2024</div>
<div class="t" style="left:3381.0px;top:1460.3px;font-size:31.5px;font-weight:400;color:#555;">22/10/2024 02:37</div>
<div style="position:absolute;left:648px;top:1528px;width:3076px;height:2px;background:#dcdcdc"></div>
<div class="t" style="left:690.0px;top:1566.8px;font-size:31.5px;font-weight:400;color:#3a7dbd;">Toner</div>
<div class="t" style="left:1065.0px;top:1562.6px;font-size:30px;font-weight:400;color:#555;">Cyan</div>
<div style="position:absolute;left:1451px;top:1566px;width:319px;height:40px;box-sizing:border-box;border:2px solid #d6d6d6;border-radius:20px;background:#ebebeb;overflow:hidden"><div style="position:absolute;left:0;top:0;bottom:0;width:17.1px;background:#3d97c8"></div></div>
<div class="t" style="left:1610.5px;transform:translateX(-50%);top:1575.7px;font-size:24px;font-weight:400;color:#333;">6%</div>
<div class="t" style="left:1846.0px;top:1566.6px;font-size:30px;font-weight:400;color:#555;">-</div>
<div class="t" style="left:2227.0px;top:1569.6px;font-size:30px;font-weight:400;color:#555;">28.000</div>
<div class="t" style="left:2612.0px;top:1569.6px;font-size:30px;font-weight:400;color:#555;">21,27%</div>
<div class="t" style="left:2996.0px;top:1568.8px;font-size:31px;font-weight:400;color:#555;">14/12/2024</div>
<div class="t" style="left:3381.0px;top:1568.3px;font-size:31.5px;font-weight:400;color:#555;">22/10/2024 02:37</div>
<div style="position:absolute;left:648px;top:1634px;width:3076px;height:2px;background:#dcdcdc"></div>
<div class="t" style="left:690.0px;top:1672.8px;font-size:31.5px;font-weight:400;color:#3a7dbd;">Toner</div>
<div class="t" style="left:1065.0px;top:1668.6px;font-size:30px;font-weight:400;color:#555;">Yellow</div>
<div style="position:absolute;left:1451px;top:1672px;width:319px;height:40px;box-sizing:border-box;border:2px solid #d6d6d6;border-radius:20px;background:#ebebeb;overflow:hidden"><div style="position:absolute;left:0;top:0;bottom:0;width:106.5px;background:#f2bc17"></div></div>
<div class="t" style="left:1610.5px;transform:translateX(-50%);top:1681.7px;font-size:24px;font-weight:400;color:#333;">34%</div>
<div class="t" style="left:1846.0px;top:1672.6px;font-size:30px;font-weight:400;color:#555;">-</div>
<div class="t" style="left:2227.0px;top:1675.6px;font-size:30px;font-weight:400;color:#555;">10.500</div>
<div class="t" style="left:2612.0px;top:1675.6px;font-size:30px;font-weight:400;color:#555;">3,24%</div>
<div class="t" style="left:2996.0px;top:1674.8px;font-size:31px;font-weight:400;color:#555;">06/11/2026</div>
<div class="t" style="left:3381.0px;top:1674.3px;font-size:31.5px;font-weight:400;color:#555;">22/10/2024 02:37</div>
<div style="position:absolute;left:648px;top:1742px;width:3076px;height:2px;background:#dcdcdc"></div>
<div class="t" style="left:690.0px;top:1780.8px;font-size:31.5px;font-weight:400;color:#3a7dbd;">Toner</div>
<div class="t" style="left:1065.0px;top:1776.6px;font-size:30px;font-weight:400;color:#555;">Magenta</div>
<div style="position:absolute;left:1451px;top:1780px;width:319px;height:40px;box-sizing:border-box;border:2px solid #d6d6d6;border-radius:20px;background:#ebebeb;overflow:hidden"><div style="position:absolute;left:0;top:0;bottom:0;width:195.8px;background:#d56b80"></div></div>
<div class="t" style="left:1610.5px;transform:translateX(-50%);top:1789.7px;font-size:24px;font-weight:400;color:#fff;">62%</div>
<div class="t" style="left:1846.0px;top:1780.6px;font-size:30px;font-weight:400;color:#555;">-</div>
<div class="t" style="left:2227.0px;top:1783.6px;font-size:30px;font-weight:400;color:#555;">10.500</div>
<div class="t" style="left:2612.0px;top:1783.6px;font-size:30px;font-weight:400;color:#555;">1,00%</div>
<div class="t" style="left:2996.0px;top:1782.8px;font-size:31px;font-weight:400;color:#555;">22/10/2029</div>
<div class="t" style="left:3381.0px;top:1782.3px;font-size:31.5px;font-weight:400;color:#555;">22/10/2024 02:37</div>
<div style="position:absolute;left:586px;top:1798px;width:3196px;height:18px;background:#efefef"></div>
</body></html>
